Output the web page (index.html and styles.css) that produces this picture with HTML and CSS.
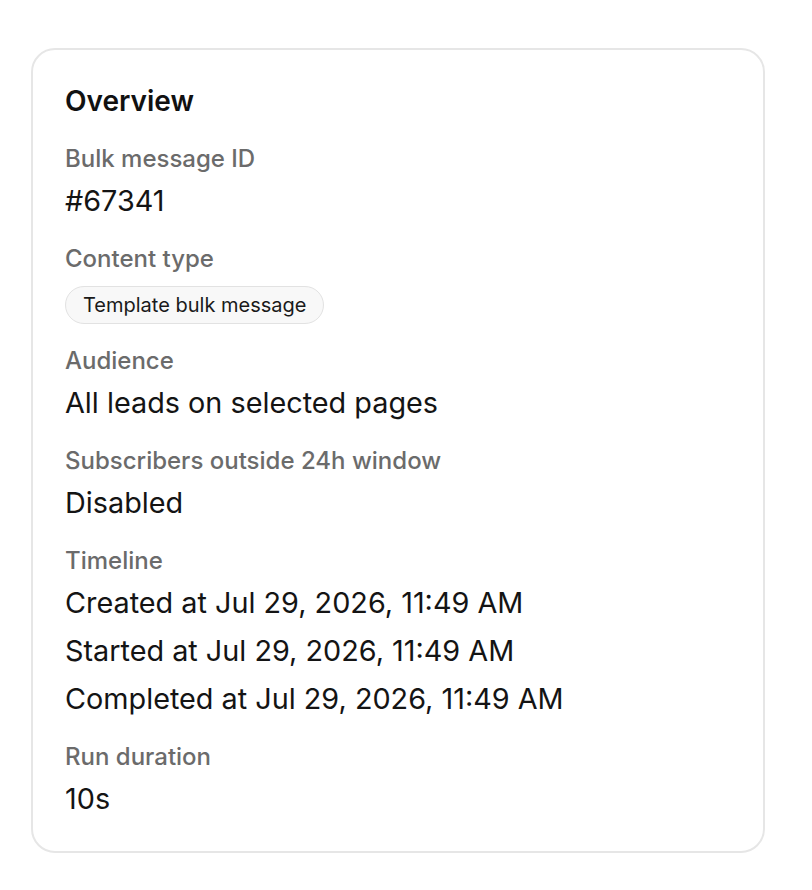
FILE: index.html
```html
<!DOCTYPE html>
<html lang="en">
  <head>
    <meta charset="UTF-8" />
    <meta name="viewport" content="width=device-width, initial-scale=1.0" />
    <title>Bulk message overview</title>
    <link rel="stylesheet" href="styles.css">
  </head>
  <body>
    <div class="overview-card">
      <h2 class="card-title">Overview</h2>

      <div class="field">
        <div class="field-label">Bulk message ID</div>
        <div class="field-value">#67341</div>
      </div>

      <div class="field">
        <div class="field-label">Content type</div>
        <div class="chip-row">
          <span class="chip">Template bulk message</span>
        </div>
      </div>

      <div class="field">
        <div class="field-label">Audience</div>
        <div class="field-value">All leads on selected pages</div>
      </div>

      <div class="field">
        <div class="field-label">Subscribers outside 24h window</div>
        <div class="field-value">Disabled</div>
      </div>

      <div class="field">
        <div class="field-label">Timeline</div>
        <div class="field-value">
          <div>Created at Jul 29, 2026, 11:49 AM</div>
          <div>Started at Jul 29, 2026, 11:49 AM</div>
          <div>Completed at Jul 29, 2026, 11:49 AM</div>
        </div>
      </div>

      <div class="field">
        <div class="field-label">Run duration</div>
        <div class="field-value">10s</div>
      </div>
    </div>
  </body>
</html>
```

FILE: styles.css
```css
* {
  box-sizing: border-box;
  font-family: Inter, 'Noto Sans', sans-serif;
}

body {
  margin: 0;
  background: #ffffff;
  color: #141414;
}

.overview-card {
  width: 734px;
  height: 805px;
  margin: 48px 0 0 31px;
  padding: 33px 32px;
  border: 2px solid #e6e6e6;
  border-radius: 24px;
  background: #ffffff;
}

.card-title {
  margin: 0 0 23px;
  font-size: 28px;
  font-weight: 600;
  line-height: 36px;
  color: #111111;
}

.field {
  margin-bottom: 17px;
}

.field-label {
  font-size: 24px;
  line-height: 34px;
  font-weight: 500;
  color: #6b6b6b;
}

.field-value {
  padding-top: 1px;
  font-size: 28.8px;
  line-height: 48px;
  color: #141414;
}

.chip-row {
  display: flex;
  padding: 10px 0 3px;
}

.chip {
  padding: 0 17px;
  font-size: 20px;
  line-height: 36px;
  border: 1px solid #e2e2e2;
  border-radius: 19px;
  background: #f8f8f8;
  color: #1a1a1a;
}
```
